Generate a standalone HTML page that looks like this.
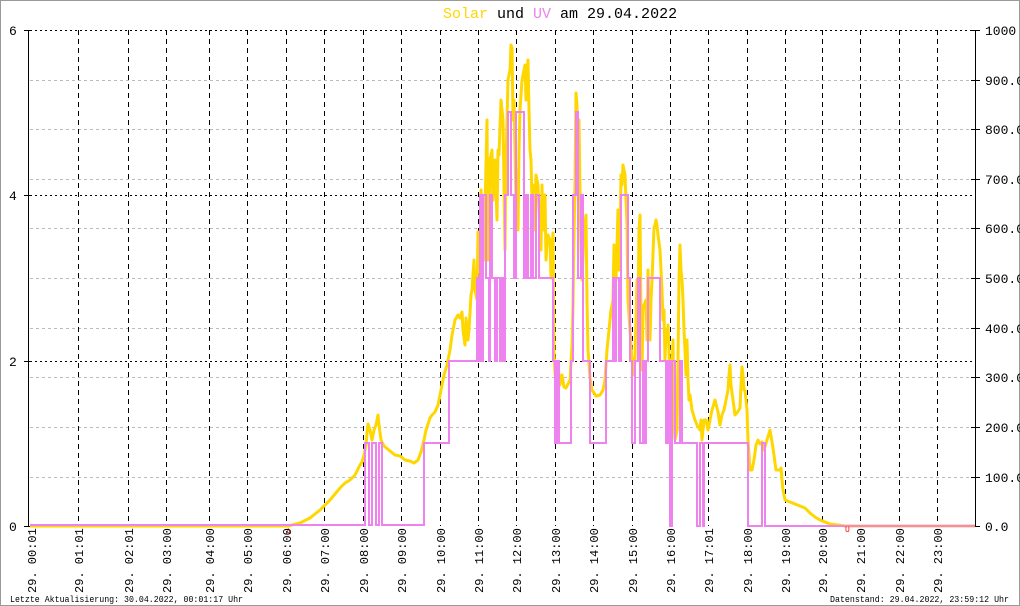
<!DOCTYPE html>
<html><head><meta charset="utf-8"><style>
html,body{margin:0;padding:0;background:#fff}
svg{display:block}
text{font-family:"Liberation Mono","DejaVu Sans Mono",monospace}
</style></head><body>
<svg width="1020" height="606" viewBox="0 0 1020 606" xmlns="http://www.w3.org/2000/svg">
<rect x="0.5" y="0.5" width="1019" height="605" fill="#fff" stroke="#999"/>
<text x="443" y="18" font-size="15" fill="#000"><tspan fill="#FFD700">Solar</tspan> und <tspan fill="#EE82EE">UV</tspan> am 29.04.2022</text>
<g stroke="#bbb" stroke-width="1" stroke-dasharray="3,3">
<line x1="30" y1="80.5" x2="975" y2="80.5"/><line x1="30" y1="129.5" x2="975" y2="129.5"/>
<line x1="30" y1="179.5" x2="975" y2="179.5"/><line x1="30" y1="228.5" x2="975" y2="228.5"/>
<line x1="30" y1="278.5" x2="975" y2="278.5"/><line x1="30" y1="328.5" x2="975" y2="328.5"/>
<line x1="30" y1="377.5" x2="975" y2="377.5"/><line x1="30" y1="427.5" x2="975" y2="427.5"/>
<line x1="30" y1="477.5" x2="975" y2="477.5"/>
</g>
<g stroke="#000" stroke-width="1" stroke-dasharray="2,3">
<line x1="30" y1="30.5" x2="975" y2="30.5"/><line x1="30" y1="195.5" x2="975" y2="195.5"/><line x1="30" y1="361.5" x2="975" y2="361.5"/>
</g>
<g stroke="#000" stroke-width="1" stroke-dasharray="5,4">
<line x1="78.5" y1="30" x2="78.5" y2="526"/><line x1="128.5" y1="30" x2="128.5" y2="526"/>
<line x1="166.5" y1="30" x2="166.5" y2="526"/><line x1="209.5" y1="30" x2="209.5" y2="526"/>
<line x1="247.5" y1="30" x2="247.5" y2="526"/><line x1="286.5" y1="30" x2="286.5" y2="526"/>
<line x1="324.5" y1="30" x2="324.5" y2="526"/><line x1="363.5" y1="30" x2="363.5" y2="526"/>
<line x1="401.5" y1="30" x2="401.5" y2="526"/><line x1="440.5" y1="30" x2="440.5" y2="526"/>
<line x1="478.5" y1="30" x2="478.5" y2="526"/><line x1="516.5" y1="30" x2="516.5" y2="526"/>
<line x1="555.5" y1="30" x2="555.5" y2="526"/><line x1="593.5" y1="30" x2="593.5" y2="526"/>
<line x1="632.5" y1="30" x2="632.5" y2="526"/><line x1="670.5" y1="30" x2="670.5" y2="526"/>
<line x1="708.5" y1="30" x2="708.5" y2="526"/><line x1="747.5" y1="30" x2="747.5" y2="526"/>
<line x1="785.5" y1="30" x2="785.5" y2="526"/><line x1="822.5" y1="30" x2="822.5" y2="526"/>
<line x1="860.5" y1="30" x2="860.5" y2="526"/><line x1="899.5" y1="30" x2="899.5" y2="526"/>
<line x1="937.5" y1="30" x2="937.5" y2="526"/>
</g>
<g stroke="#000" stroke-width="1">
<line x1="28.5" y1="30" x2="28.5" y2="526"/>
<line x1="975.5" y1="30" x2="975.5" y2="526"/>
<line x1="24" y1="30.5" x2="32" y2="30.5"/><line x1="24" y1="195.5" x2="32" y2="195.5"/>
<line x1="24" y1="361.5" x2="32" y2="361.5"/><line x1="24" y1="526.5" x2="32" y2="526.5"/>
<line x1="971" y1="30.5" x2="980" y2="30.5"/><line x1="971" y1="80.5" x2="980" y2="80.5"/>
<line x1="971" y1="129.5" x2="980" y2="129.5"/><line x1="971" y1="179.5" x2="980" y2="179.5"/>
<line x1="971" y1="228.5" x2="980" y2="228.5"/><line x1="971" y1="278.5" x2="980" y2="278.5"/>
<line x1="971" y1="328.5" x2="980" y2="328.5"/><line x1="971" y1="377.5" x2="980" y2="377.5"/>
<line x1="971" y1="427.5" x2="980" y2="427.5"/><line x1="971" y1="477.5" x2="980" y2="477.5"/>
<line x1="971" y1="526.5" x2="980" y2="526.5"/>
</g>
<g font-size="13" fill="#000">
<text x="9" y="35">6</text><text x="9" y="200">4</text><text x="9" y="366">2</text><text x="9" y="531">0</text>
<text x="985" y="35">1000</text><text x="985" y="85">900.0</text><text x="985" y="134">800.0</text>
<text x="985" y="184">700.0</text><text x="985" y="233">600.0</text><text x="985" y="283">500.0</text>
<text x="985" y="333">400.0</text><text x="985" y="382">300.0</text><text x="985" y="432">200.0</text>
<text x="985" y="482">100.0</text><text x="985" y="531">0.0</text>
</g>
<polyline fill="none" stroke="#FFD700" stroke-width="3" stroke-linejoin="round" points="30,526 288,526 292,525 300,523 310,518 320,510 330,500 340,488 345,483 350,480 355,475 360,465 362,462 364,455 366,445 367,433 368,424 370,430 372,440 374,430 376,425 377,420 378,415 379,425 381,440 384,446 390,451 395,455 400,456 405,460 410,461 414,463 418,460 421,452 424,440 426,430 430,418 432,415 435,412 438,405 440,395 442,385 444,375 447,365 450,350 452,335 455,320 458,315 460,318 462,312 463,330 465,345 466,318 468,340 469,330 471,295 472,290 474,260 475,290 477,300 478,232 480,270 481,190 482,250 483,200 484,260 486,165 487,120 488,260 489,250 490,160 492,150 493,200 495,160 497,220 498,150 499,155 501,100 503,120 505,250 506,160 508,80 510,70 511,45 512,48 513,120 514,100 516,200 517,170 518,230 519,150 520,110 522,80 524,70 525,65 526,100 527,75 528,60 529,110 530,150 531,160 532,200 534,185 535,230 536,175 538,185 539,210 541,250 542,185 543,230 545,195 546,260 547,245 548,235 550,240 551,278 553,233 554,353 555,373 557,390 558,365 560,385 562,375 564,387 566,388 570,380 572,345 573,305 574,235 575,185 576,93 577,105 578,160 579,120 580,190 581,250 582,280 584,230 586,215 587,300 588,350 590,378 592,390 596,396 600,395 603,390 605,380 607,350 609,330 611,310 613,300 614,245 616,280 618,210 619,270 620,240 621,175 622,185 623,165 625,175 627,225 628,300 630,330 632,360 634,375 635,358 637,280 638,310 639,230 640,215 641,320 642,370 643,310 644,305 646,300 647,340 648,270 649,310 650,340 651,300 652,280 654,228 655,225 656,220 657,225 658,235 660,250 661,270 662,290 663,320 664,310 665,360 666,330 667,340 668,325 670,380 672,370 673,340 674,420 675,440 677,430 678,360 679,280 680,245 681,270 682,280 683,300 684,330 685,350 686,375 687,340 688,380 689,400 690,395 692,410 695,420 697,425 700,430 701,420 702,440 704,420 706,420 708,430 710,420 712,410 715,400 718,412 720,425 722,415 724,410 726,400 728,390 729,375 730,365 731,385 733,400 735,415 737,413 740,408 741,385 742,367 743,375 744,390 745,390 747,410 748,440 749,455 750,470 752,470 754,460 756,445 758,440 760,444 762,442 764,450 767,440 770,430 773,448 776,470 778,470 780,470 781,468 782,480 783,490 785,500 790,502 795,504 800,506 805,508 810,513 815,517 820,520 825,522 830,524 838,525 845,526 975,526"/>
<path fill="none" stroke="#EE82EE" stroke-width="2" d="M30,525 H365 V443 H369 V525 H372 V443 H376 V525 H379 V443 H382 V525 H424 V443 H449 V361 H477 V278 H479 V361 H480 V195 H481 V361 H483 V195 H486 V278 H489 V361 H490 V195 H492 V278 H495 V361 H497 V278 H500 V361 H502 V278 H503 V361 H505 V195 H508 V112 H511 V195 H514 V278 H516 V112 H524 V278 H526 V195 H528 V278 H531 V195 H533 V278 H536 V195 H539 V278 H553 V361 H555 V443 H557 V361 H559 V443 H571 V361 H573 V195 H576 V112 H578 V278 H581 V195 H583 V361 H590 V443 H606 V361 H613 V278 H615 V361 H616 V278 H619 V361 H621 V195 H628 V278 H630 V361 H632 V443 H635 V361 H638 V278 H640 V443 H643 V361 H645 V443 H646 V361 H648 V278 H660 V361 H666 V443 H668 V361 H670 V526 H672 V361 H675 V443 H680 V361 H682 V443 H697 V526 H700 V443 H703 V526 H704 V443 H748 V526 H762 V443 H765 V526 H975"/>
<text x="286" y="534" font-size="8" fill="#f00">A</text>
<text x="845" y="532" font-size="8" fill="#f00">U</text>
<g font-size="12" fill="#000">
<text transform="translate(36,593) rotate(-90)">29. 00:01</text>
<text transform="translate(83,593) rotate(-90)">29. 01:01</text>
<text transform="translate(133,593) rotate(-90)">29. 02:01</text>
<text transform="translate(171,593) rotate(-90)">29. 03:00</text>
<text transform="translate(214,593) rotate(-90)">29. 04:00</text>
<text transform="translate(252,593) rotate(-90)">29. 05:00</text>
<text transform="translate(291,593) rotate(-90)">29. 06:00</text>
<text transform="translate(329,593) rotate(-90)">29. 07:00</text>
<text transform="translate(368,593) rotate(-90)">29. 08:00</text>
<text transform="translate(406,593) rotate(-90)">29. 09:00</text>
<text transform="translate(445,593) rotate(-90)">29. 10:00</text>
<text transform="translate(483,593) rotate(-90)">29. 11:00</text>
<text transform="translate(521,593) rotate(-90)">29. 12:00</text>
<text transform="translate(560,593) rotate(-90)">29. 13:00</text>
<text transform="translate(598,593) rotate(-90)">29. 14:00</text>
<text transform="translate(637,593) rotate(-90)">29. 15:00</text>
<text transform="translate(675,593) rotate(-90)">29. 16:00</text>
<text transform="translate(713,593) rotate(-90)">29. 17:01</text>
<text transform="translate(752,593) rotate(-90)">29. 18:00</text>
<text transform="translate(790,593) rotate(-90)">29. 19:00</text>
<text transform="translate(827,593) rotate(-90)">29. 20:00</text>
<text transform="translate(865,593) rotate(-90)">29. 21:00</text>
<text transform="translate(904,593) rotate(-90)">29. 22:00</text>
<text transform="translate(942,593) rotate(-90)">29. 23:00</text>
</g>
<text x="10" y="602" font-size="9" fill="#000" textLength="233" lengthAdjust="spacingAndGlyphs">Letzte Aktualisierung: 30.04.2022, 00:01:17 Uhr</text>
<text x="830" y="602" font-size="9" fill="#000" textLength="179" lengthAdjust="spacingAndGlyphs">Datenstand: 29.04.2022, 23:59:12 Uhr</text>
</svg>
</body></html>
